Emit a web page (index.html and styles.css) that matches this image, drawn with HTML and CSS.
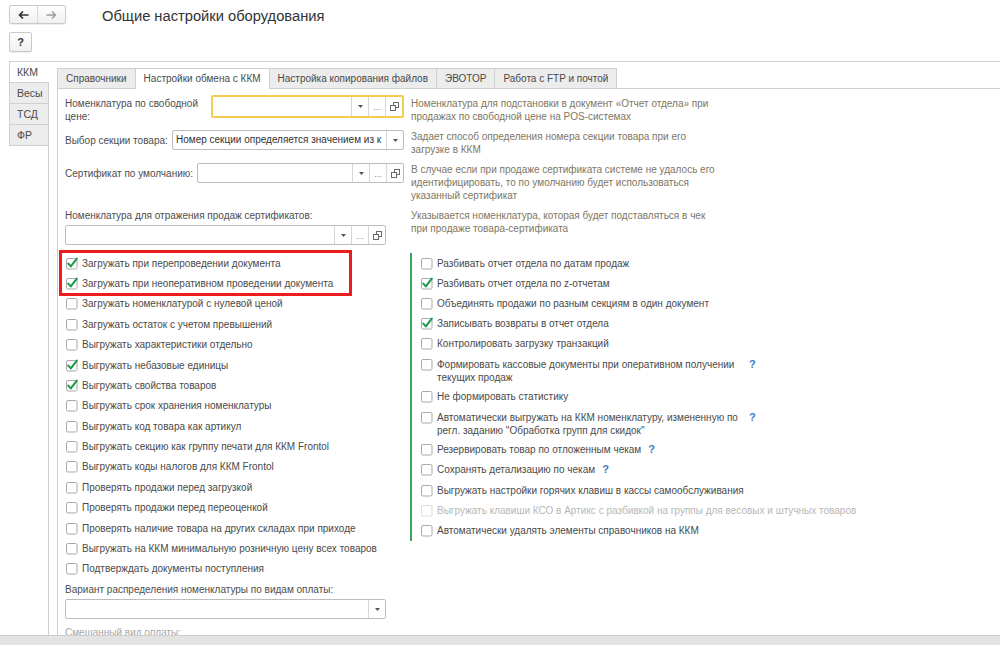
FILE: index.html
```html
<!DOCTYPE html>
<html lang="ru">
<head>
<meta charset="utf-8">
<title>Общие настройки оборудования</title>
<link rel="stylesheet" href="styles.css">
</head>
<body>
<svg class="defs" xmlns="http://www.w3.org/2000/svg">
  <symbol id="cb-off" viewBox="0 0 13 13"><rect x="1.5" y="1.5" width="10.5" height="10.5" rx="1.5" fill="#fff" stroke="#a9a9a9"/></symbol>
  <symbol id="cb-on" viewBox="0 0 13 13"><rect x="1.5" y="1.5" width="10.5" height="10.5" rx="1.5" fill="#fff" stroke="#a9a9a9"/><path d="M3.3 6.6 L5.8 9.4 L11.8 1.6" fill="none" stroke="#1d9a4b" stroke-width="2.1" stroke-linecap="round" stroke-linejoin="round"/></symbol>
  <symbol id="cb-dis" viewBox="0 0 13 13"><rect x="1.5" y="1.5" width="10.5" height="10.5" rx="1.5" fill="#fff" stroke="#dadada"/></symbol>
  <symbol id="dd" viewBox="0 0 5 3"><path d="M0 0 H5 L2.5 3 Z" fill="#555"/></symbol>
  <symbol id="open" viewBox="0 0 9 9"><rect x="3.5" y="0.5" width="5" height="5" fill="#fff" stroke="#6a6a6a"/><rect x="0.5" y="3.5" width="5" height="5" fill="#fff" stroke="#6a6a6a"/></symbol>
</svg>
<div class="app">
  <header class="topbar">
    <div class="nav">
      <span class="nav-btn"><svg width="11" height="10" viewBox="0 0 11 10"><path d="M10.5 5 H1.5 M5 1.5 L1.5 5 L5 8.5" fill="none" stroke="#333" stroke-width="1.7"/></svg></span>
      <span class="nav-btn"><svg width="11" height="10" viewBox="0 0 11 10"><path d="M0.5 5 H9.5 M6 1.5 L9.5 5 L6 8.5" fill="none" stroke="#9a9a9a" stroke-width="1.4"/></svg></span>
    </div>
    <h1 class="title">Общие настройки оборудования</h1>
  </header>
  <div class="toolbar"><span class="help">?</span></div>
  <div class="main">
    <div class="vtabs">
      <div class="vtab active">ККМ</div>
      <div class="vtab">Весы</div>
      <div class="vtab">ТСД</div>
      <div class="vtab">ФР</div>
    </div>
    <div class="panel">
      <div class="htabs">
        <div class="htab">Справочники</div>
        <div class="htab active">Настройки обмена с ККМ</div>
        <div class="htab">Настройка копирования файлов</div>
        <div class="htab">ЭВОТОР</div>
        <div class="htab">Работа с FTP и почтой</div>
      </div>
      <div class="page">
        <div class="form">
          <div class="field top">
            <div class="lbl lbl-wide">Номенклатура по свободной цене:</div>
            <div class="input focus">
              <div class="val"></div>
              <div class="btn"><svg class="dd"><use href="#dd"/></svg></div>
              <div class="btn dots">...</div>
              <div class="btn"><svg class="op"><use href="#open"/></svg></div>
            </div>
          </div>
          <div class="hint first">Номенклатура для подстановки в документ «Отчет отдела» при<br>продажах по свободной цене на POS-системах</div>

          <div class="field">
            <div class="lbl lbl-sec">Выбор секции товара:</div>
            <div class="input">
              <div class="val">Номер секции определяется значением из к</div>
              <div class="btn"><svg class="dd"><use href="#dd"/></svg></div>
            </div>
          </div>
          <div class="hint">Задает способ определения номера секции товара при его<br>загрузке в ККМ</div>

          <div class="field">
            <div class="lbl lbl-cert">Сертификат по умолчанию:</div>
            <div class="input">
              <div class="val"></div>
              <div class="btn"><svg class="dd"><use href="#dd"/></svg></div>
              <div class="btn dots">...</div>
              <div class="btn"><svg class="op"><use href="#open"/></svg></div>
            </div>
          </div>
          <div class="hint">В случае если при продаже сертификата системе не удалось его<br>идентифицировать, то по умолчанию будет использоваться<br>указанный сертификат</div>

          <div class="field stack">
            <div class="lbl">Номенклатура для отражения продаж сертификатов:</div>
            <div class="input narrow">
              <div class="val"></div>
              <div class="btn"><svg class="dd"><use href="#dd"/></svg></div>
              <div class="btn dots">...</div>
              <div class="btn"><svg class="op"><use href="#open"/></svg></div>
            </div>
          </div>
          <div class="hint">Указывается номенклатура, которая будет подставляться в чек<br>при продаже товара-сертификата</div>
        </div>

        <div class="checks">
          <div class="col col-left">
            <div class="marked">
              <div class="item"><svg class="cb"><use href="#cb-on"/></svg><span class="text">Загружать при перепроведении документа</span></div>
              <div class="item"><svg class="cb"><use href="#cb-on"/></svg><span class="text">Загружать при неоперативном проведении документа</span></div>
            </div>
            <div class="item"><svg class="cb"><use href="#cb-off"/></svg><span class="text">Загружать номенклатурой с нулевой ценой</span></div>
            <div class="item"><svg class="cb"><use href="#cb-off"/></svg><span class="text">Загружать остаток с учетом превышений</span></div>
            <div class="item"><svg class="cb"><use href="#cb-off"/></svg><span class="text">Выгружать характеристики отдельно</span></div>
            <div class="item"><svg class="cb"><use href="#cb-on"/></svg><span class="text">Выгружать небазовые единицы</span></div>
            <div class="item"><svg class="cb"><use href="#cb-on"/></svg><span class="text">Выгружать свойства товаров</span></div>
            <div class="item"><svg class="cb"><use href="#cb-off"/></svg><span class="text">Выгружать срок хранения номенклатуры</span></div>
            <div class="item"><svg class="cb"><use href="#cb-off"/></svg><span class="text">Выгружать код товара как артикул</span></div>
            <div class="item"><svg class="cb"><use href="#cb-off"/></svg><span class="text">Выгружать секцию как группу печати для ККМ Frontol</span></div>
            <div class="item"><svg class="cb"><use href="#cb-off"/></svg><span class="text">Выгружать коды налогов для ККМ Frontol</span></div>
            <div class="item"><svg class="cb"><use href="#cb-off"/></svg><span class="text">Проверять продажи перед загрузкой</span></div>
            <div class="item"><svg class="cb"><use href="#cb-off"/></svg><span class="text">Проверять продажи перед переоценкой</span></div>
            <div class="item"><svg class="cb"><use href="#cb-off"/></svg><span class="text">Проверять наличие товара на других складах при приходе</span></div>
            <div class="item"><svg class="cb"><use href="#cb-off"/></svg><span class="text">Выгружать на ККМ минимальную розничную цену всех товаров</span></div>
            <div class="item"><svg class="cb"><use href="#cb-off"/></svg><span class="text">Подтверждать документы поступления</span></div>
          </div>
          <div class="col col-right">
            <div class="item"><svg class="cb"><use href="#cb-off"/></svg><span class="text">Разбивать отчет отдела по датам продаж</span></div>
            <div class="item"><svg class="cb"><use href="#cb-on"/></svg><span class="text">Разбивать отчет отдела по z-отчетам</span></div>
            <div class="item"><svg class="cb"><use href="#cb-off"/></svg><span class="text">Объединять продажи по разным секциям в один документ</span></div>
            <div class="item"><svg class="cb"><use href="#cb-on"/></svg><span class="text">Записывать возвраты в отчет отдела</span></div>
            <div class="item"><svg class="cb"><use href="#cb-off"/></svg><span class="text">Контролировать загрузку транзакций</span></div>
            <div class="item two"><svg class="cb"><use href="#cb-off"/></svg><span class="text wrap">Формировать кассовые документы при оперативном получении<br>текущих продаж</span><span class="q">?</span></div>
            <div class="item"><svg class="cb"><use href="#cb-off"/></svg><span class="text">Не формировать статистику</span></div>
            <div class="item two"><svg class="cb"><use href="#cb-off"/></svg><span class="text wrap">Автоматически выгружать на ККМ номенклатуру, измененную по<br>регл. заданию "Обработка групп для скидок"</span><span class="q">?</span></div>
            <div class="item"><svg class="cb"><use href="#cb-off"/></svg><span class="text">Резервировать товар по отложенным чекам</span><span class="q">?</span></div>
            <div class="item"><svg class="cb"><use href="#cb-off"/></svg><span class="text">Сохранять детализацию по чекам</span><span class="q">?</span></div>
            <div class="item"><svg class="cb"><use href="#cb-off"/></svg><span class="text">Выгружать настройки горячих клавиш в кассы самообслуживания</span></div>
            <div class="item disabled"><svg class="cb"><use href="#cb-dis"/></svg><span class="text">Выгружать клавиши КСО в Артикс с разбивкой на группы для весовых и штучных товаров</span></div>
            <div class="item"><svg class="cb"><use href="#cb-off"/></svg><span class="text">Автоматически удалять элементы справочников на ККМ</span></div>
          </div>
        </div>

        <div class="field stack bottom">
          <div class="lbl">Вариант распределения номенклатуры по видам оплаты:</div>
          <div class="input narrow">
            <div class="val"></div>
            <div class="btn"><svg class="dd"><use href="#dd"/></svg></div>
          </div>
        </div>
        <div class="muted">Смешанный вид оплаты:</div>
      </div>
    </div>
  </div>
  <div class="footer"></div>
</div>
</body>
</html>
```
FILE: styles.css
```css
* { box-sizing: border-box; }
html, body { margin: 0; padding: 0; }
body {
  font-family: "Liberation Sans", Arial, sans-serif;
  font-size: 10px;
  color: #4a4a4a;
  background: #fff;
}
.defs { position: absolute; width: 0; height: 0; overflow: hidden; }

.app { display: flex; flex-direction: column; height: 645px; overflow: hidden; }

.topbar { display: flex; align-items: center; height: 24px; padding: 5px 0 0 9px; flex: none; }
.nav {
  display: flex; width: 57px; height: 19px;
  border: 1px solid #c9c9c9; border-radius: 2px;
  background: linear-gradient(#ffffff, #f0f0f0);
  box-shadow: 0 1px 1px rgba(0,0,0,0.07);
}
.nav-btn { flex: 1; display: flex; align-items: center; justify-content: center; }
.nav-btn + .nav-btn { border-left: 1px solid #d8d8d8; }
.title { margin: 2px 0 0 36px; font-size: 14.7px; font-weight: normal; color: #333; }

.toolbar { padding: 8px 0 0 9px; flex: none; }
.help {
  display: flex; align-items: center; justify-content: center;
  width: 23px; height: 20px;
  border: 1px solid #c9c9c9; border-radius: 2px;
  background: linear-gradient(#ffffff, #f0f0f0);
  box-shadow: 0 1px 1px rgba(0,0,0,0.07);
  font-weight: bold; font-size: 11px; color: #333;
}

.main { flex: 1; min-height: 0; display: flex; margin: 9px 0 0 9px; border-top: 1px solid #cfcfcf; }

.vtabs { flex: none; width: 40px; display: flex; flex-direction: column; border-right: 1px solid #cfcfcf; }
.vtab {
  height: 21px; line-height: 20px; padding-left: 7px;
  border-left: 1px solid #cfcfcf; border-bottom: 1px solid #cfcfcf;
  background: #ececec; color: #4a4a4a; font-size: 10.5px;
}
.vtab.active { background: #fff; margin-right: -1px; }

.panel { flex: 1; min-width: 0; display: flex; flex-direction: column; padding: 6px 0 0 8px; }

.htabs { flex: none; display: flex; align-items: flex-start; height: 21px; border-bottom: 1px solid #cfcfcf; }
.htab {
  height: 20px; line-height: 19px; padding: 0 8px;
  border: 1px solid #cfcfcf; border-bottom: 0;
  background: #ececec; margin-right: -1px; white-space: nowrap;
  font-size: 10px;
}
.htab.active { background: #fff; height: 21px; margin-bottom: -1px; }

.page { flex: 1; min-height: 0; overflow: hidden; border-left: 1px solid #cfcfcf; padding: 6px 0 0 7px; }

.form { display: grid; grid-template-columns: 339px 1fr; column-gap: 7px; row-gap: 7px; align-items: start; }
.field { display: flex; align-items: center; }
.field.top { align-items: flex-start; }
.lbl { flex: none; margin-right: 4px; white-space: nowrap; line-height: 13px; color: #4d4d4d; }
.lbl-wide { width: 142px; white-space: normal; padding-top: 2px; }
.lbl-sec { width: 103px; }
.lbl-cert { width: 128px; }
.field.stack { flex-direction: column; align-items: flex-start; }
.field.stack .lbl { margin: 0 0 3px 0; }

.input {
  flex: 1; min-width: 0; display: flex; height: 20px;
  border: 1px solid #bdbdbd; border-radius: 2px; background: #fff;
}
.input.focus { height: 23px; border: 2px solid #f3cc50; }
.input.narrow { flex: none; width: 321px; }
.val { flex: 1; min-width: 0; padding-left: 3px; line-height: 18px; white-space: nowrap; overflow: hidden; color: #333; }
.btn { flex: none; width: 17px; border-left: 1px solid #d6d6d6; display: flex; align-items: center; justify-content: center; }
.dots { color: #888; font-size: 9px; line-height: 1; padding-top: 2px; }
.dd { width: 5px; height: 3px; }
.op { width: 9px; height: 9px; }

.hint { color: #7e7663; line-height: 13px; white-space: nowrap; }
.hint.first { padding-top: 2px; }

.checks { display: flex; column-gap: 6px; margin-top: 8px; }
.col-left { flex: none; width: 339px; }
.col-right { align-self: flex-start; border-left: 2px solid #3aa55d; padding-left: 8px; }
.item { display: flex; align-items: flex-start; padding: 3.7px 0; line-height: 13px; color: #4a4a4a; white-space: nowrap; }
.col-right .item { padding: 3.6px 0; }
.col-right .item.two { padding-bottom: 3.2px; }
.cb { flex: none; width: 13px; height: 13px; margin-right: 4px; overflow: visible; }
.text.wrap { width: 305px; }
.q { color: #3b7dc4; font-weight: bold; margin-left: 7px; font-size: 11px; }
.item.disabled { color: #b7b7b7; }

.marked { position: relative; }
.marked::after {
  content: ""; position: absolute;
  top: -3px; left: -6px; right: 52px; bottom: -2px;
  border: 3px solid #ee1c1c;
}

.field.bottom { margin-top: 4px; }
.field.bottom .lbl { margin-bottom: 3px; }
.muted { margin-top: 7px; color: #a5a5a5; line-height: 13px; }

.footer { flex: none; height: 10px; background: #e3e3e3; border-top: 1px solid #cdcdcd; }
```
